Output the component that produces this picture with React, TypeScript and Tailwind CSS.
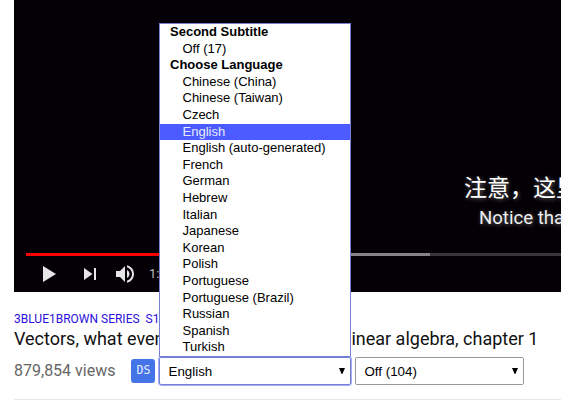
import React from "react";

type Entry = { label: string; heading?: boolean; selected?: boolean };

const entries: Entry[] = [
  { label: "Second Subtitle", heading: true },
  { label: "Off (17)" },
  { label: "Choose Language", heading: true },
  { label: "Chinese (China)" },
  { label: "Chinese (Taiwan)" },
  { label: "Czech" },
  { label: "English", selected: true },
  { label: "English (auto-generated)" },
  { label: "French" },
  { label: "German" },
  { label: "Hebrew" },
  { label: "Italian" },
  { label: "Japanese" },
  { label: "Korean" },
  { label: "Polish" },
  { label: "Portuguese" },
  { label: "Portuguese (Brazil)" },
  { label: "Russian" },
  { label: "Spanish" },
  { label: "Turkish" },
];

function LanguageMenu() {
  return (
    <div
      role="listbox"
      className="absolute left-0 bottom-[28px] z-10 h-[334px] w-[192px] border border-[#7680d2] bg-white font-['Liberation_Sans',Arial,sans-serif] text-[13px] text-black"
    >
      {entries.map((e) => (
        <div
          key={e.label}
          role={e.heading ? "presentation" : "option"}
          className={
            "h-[16.6px] whitespace-nowrap leading-[16.6px] " +
            (e.heading ? "pl-[10px] font-bold" : "pl-[22.5px]") +
            (e.selected ? " bg-[#4c5bff] text-[#e8ebff]" : "")
          }
        >
          {e.label}
        </div>
      ))}
    </div>
  );
}

function Caret() {
  return (
    <svg width="6" height="6" viewBox="0 0 6 6" aria-hidden="true">
      <path d="M0 0h6L3.4 6h-.8z" fill="#000" />
    </svg>
  );
}

function Player() {
  return (
    <div className="ml-[14px] flex h-[292px] flex-col overflow-hidden bg-[#040006]">
      <div className="flex h-[253px] flex-col items-start justify-end whitespace-nowrap pb-[21px] text-[#eee] [text-shadow:1px_1px_4px_#666]">
        <div className="ml-[450px] h-[34px] font-['Noto_Sans_CJK_SC',sans-serif] text-[23px] leading-[32px] text-white">
          注意，这里
        </div>
        <div className="ml-[465px] h-[28px] font-[Roboto,sans-serif] text-[18.6px] leading-[28px]">
          Notice that
        </div>
      </div>
      <div className="ml-3 flex h-[3px] bg-[#38363a]">
        <div className="w-[200px] bg-[#f00]" />
        <div className="w-[204px] bg-[#858386]" />
      </div>
      <div className="flex h-9 items-center pl-[29px] text-[#e6e6e6]">
        <svg width="13" height="16" viewBox="0 0 13 16" fill="currentColor">
          <path d="M0 0l13 8-13 8z" />
        </svg>
        <svg className="ml-7" width="12" height="12" viewBox="0 0 12 12" fill="currentColor">
          <path d="M0 0l8.5 6L0 12zM10 0h2v12h-2z" />
        </svg>
        <svg className="ml-5" width="18" height="18" viewBox="0 0 18 18" fill="currentColor">
          <path d="M0 6v6h4l5 5V1L4 6zM13.5 9c0-1.77-1-3.29-2.5-4v8c1.5-.74 2.5-2.26 2.5-4zM11 .2v2.1c2.9.86 5 3.54 5 6.7s-2.1 5.85-5 6.7v2.1c4-.91 7-4.5 7-8.8S15 1.100 11 .2z" />
        </svg>
        <span className="ml-[15px] font-[Roboto,sans-serif] text-[13px] text-[#bbb]">1:23</span>
      </div>
    </div>
  );
}

export default function App() {
  return (
    <div className="h-[410px] w-[561px] overflow-hidden bg-white font-[Roboto,sans-serif]">
      <Player />
      <div className="ml-[14px] pt-[19px]">
        <div className="h-4 whitespace-pre text-[12px] leading-4 text-[#2c10db]">
          3BLUE1BROWN SERIES{"  "}S1 • E1
        </div>
        <h1 className="h-6 whitespace-nowrap text-[18px] font-normal leading-6 text-[#111]">
          Vectors, what even are they? | Essence of linear algebra, chapter 1
        </h1>
        <div className="flex h-[49px] items-start border-b border-[#e8e8e8] pt-[6px]">
          <div className="w-[117px] whitespace-nowrap text-[16px] leading-[28px] text-[#666]">
            879,854 views
          </div>
          <div className="mt-[2px] flex h-6 w-6 items-center justify-center rounded-[3px] bg-[#4574e8] pl-px font-['DejaVu_Sans_Mono',monospace] text-[11.5px] text-[#e4ecff]">
            DS
          </div>
          <div className="relative ml-1 h-7 w-[192px]">
            <div className="flex h-7 items-center justify-between rounded-[2px] border border-[#7680d2] pl-[8.5px] pr-[5px] font-['Liberation_Sans',Arial,sans-serif] text-[13.33px] text-black outline outline-1 outline-[#a4adff]">
              <span className="pt-[2px]">English</span>
              <Caret />
            </div>
            <LanguageMenu />
          </div>
          <div className="ml-1 flex h-7 w-[169px] items-center justify-between rounded-[2px] border border-[#999] pl-[8.5px] pr-[5px] font-['Liberation_Sans',Arial,sans-serif] text-[13.33px] text-black">
            <span className="pt-[2px]">Off (104)</span>
            <Caret />
          </div>
        </div>
      </div>
    </div>
  );
}
